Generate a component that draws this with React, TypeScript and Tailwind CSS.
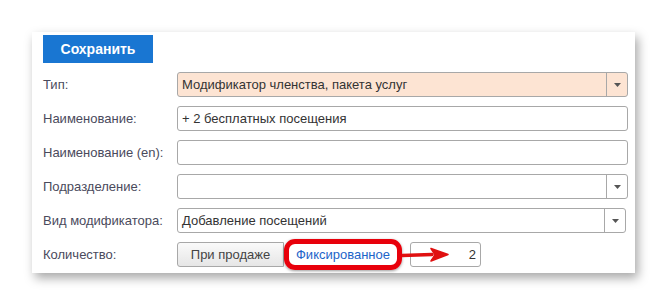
import React from "react";

const font = { fontFamily: '"Liberation Sans", Arial, sans-serif' };

const Caret = () => (
  <div className="flex w-[21px] shrink-0 items-center justify-center border-l border-[#a8a8a8]">
    <svg width="7" height="4" viewBox="0 0 7 4">
      <path d="M0 0h7L3.5 4z" fill="#555" />
    </svg>
  </div>
);

const Field = ({
  value,
  select,
  bg = "bg-white",
  narrow,
}: {
  value?: string;
  select?: boolean;
  bg?: string;
  narrow?: boolean;
}) => (
  <div
    className={`flex h-[25px] rounded-[3px] border border-[#a8a8a8] ${bg} ${
      narrow ? "w-[449px]" : "w-[451px]"
    }`}
  >
    <div className="flex flex-1 items-center px-[4px] text-[13px] text-[#333]">{value}</div>
    {select && <Caret />}
  </div>
);

const Row = ({ label, children }: { label: string; children: React.ReactNode }) => (
  <div className="flex h-[25px] items-center">
    <div className="w-[134px] text-[13px] text-[#4a4a5c]">{label}</div>
    {children}
  </div>
);

const Arrow = () => (
  <svg
    className="pointer-events-none absolute left-[225px] top-[5px]"
    width="48"
    height="16"
    viewBox="0 0 48 16"
  >
    <path d="M0 8.5L30 7.5" stroke="#e01010" strokeWidth="3.5" strokeLinecap="round" />
    <path d="M29 1.5L46 7.5L29 14L33 7.8z" fill="#e01010" stroke="#e01010" strokeWidth="1.5" strokeLinejoin="round" />
  </svg>
);

export default function App() {
  return (
    <div className="min-h-screen bg-white pt-[32px] pl-[32px]" style={font}>
      <div className="h-[241px] w-[603px] bg-white pl-[11px] pt-[3px] shadow-[3px_5px_10px_rgba(0,0,0,0.35)]">
        <button className="h-[28px] w-[110px] bg-[#1976d2] text-[14px] font-bold text-white">
          Сохранить
        </button>
        <div className="mt-[9px] flex flex-col gap-[9px]">
          <Row label="Тип:">
            <Field value="Модификатор членства, пакета услуг" select bg="bg-[#fde4d3]" />
          </Row>
          <Row label="Наименование:">
            <Field value="+ 2 бесплатных посещения" />
          </Row>
          <Row label="Наименование (en):">
            <Field />
          </Row>
          <Row label="Подразделение:">
            <Field select />
          </Row>
          <Row label="Вид модификатора:">
            <Field value="Добавление посещений" select narrow />
          </Row>
          <Row label="Количество:">
            <div className="relative flex h-[25px] items-center">
              <button className="h-[25px] w-[107px] rounded-l-[3px] border border-[#a8a8a8] bg-gradient-to-b from-[#fafafa] to-[#e6e6e6] text-[13px] text-[#444]">
                При продаже
              </button>
              <div className="relative flex h-[25px] w-[118px] items-center justify-center bg-white text-[13px] text-[#1d64c9]">
                Фиксированное
                <div className="absolute -inset-y-[3px] inset-x-0 rounded-[11px] border-[5px] border-[#e8000b] shadow-[0_1px_3px_rgba(0,0,0,0.4)]" />
              </div>
              <div className="ml-[8px] flex h-[25px] w-[71px] items-center justify-end rounded-[3px] border border-[#a8a8a8] bg-white px-[4px] text-[13px] text-[#333]">
                2
              </div>
              <Arrow />
            </div>
          </Row>
        </div>
      </div>
    </div>
  );
}
